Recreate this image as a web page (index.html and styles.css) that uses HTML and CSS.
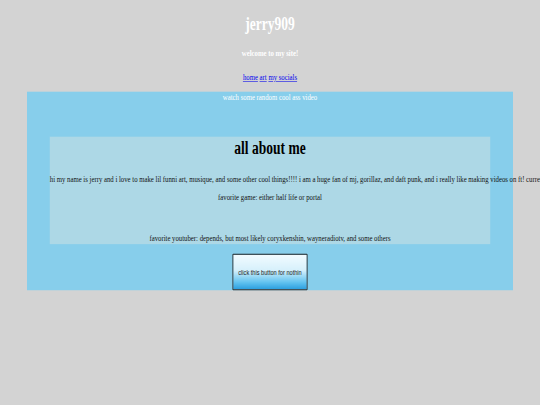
FILE: index.html
```html
<!DOCTYPE html>
<html lang="en">
<head>
    <meta charset="UTF-8">
    <meta name="viewport" content="width=device-width, initial-scale=1.0">
    <title>jerry909</title>
    <link rel="stylesheet" href="styles.css">
</head>
<body>
    <div class="screen">
        <h1 class="site-title">jerry909</h1>
        <h4 class="welcome">welcome to my site!</h4>
        <p class="nav"><a href="#">home</a> <a href="#">art</a> <a href="#">my socials</a></p>

        <div class="main-box">
            <p class="video-note">watch some random cool ass video</p>

            <div class="about">
                <h2>all about me</h2>
                <p class="bio">hi my name is jerry and i love to make lil funni art, musique, and some other cool things!!!! i am a huge fan of mj, gorillaz, and daft punk, and i really like making videos on ft! currently</p>
                <p>favorite game: either half life or portal</p>
                <p class="youtuber">favorite youtuber: depends, but most likely coryxkenshin, wayneradiotv, and some others</p>
            </div>

            <button class="nothing-btn" onclick="alert('nothin')">click this button for nothin</button>
        </div>
    </div>
</body>
</html>
```

FILE: styles.css
```css
html,
body {
    margin: 0;
    padding: 0;
    overflow: hidden;
}

body {
    background-color: #d3d3d3;
    font-family: "Liberation Serif", "Times New Roman", serif;
    font-size: 16px;
    text-align: center;
}

.screen {
    width: 1280px;
    height: 720px;
    padding-top: 24px;
    box-sizing: border-box;
    transform: scale(0.421875, 0.5625);
    transform-origin: 0 0;
}

.site-title {
    margin: 0 0 24px;
    font-size: 32px;
    font-weight: bold;
    color: white;
}

.welcome {
    margin: 0 0 26px;
    font-size: 16px;
    font-weight: bold;
    color: white;
}

.nav {
    margin: 0 0 16px;
}

.nav a {
    color: #0000ee;
}

.main-box {
    width: 90%;
    margin: 0 auto;
    background-color: skyblue;
}

.video-note {
    margin: 0 0 62px;
    color: white;
}

.about {
    margin: 0 54px;
    padding: 2px 0 1px;
    background-color: lightblue;
}

.about h2 {
    margin: 0 0 27px;
    font-size: 32px;
    font-weight: bold;
    color: black;
}

.about p {
    margin: 0 0 15px;
    color: #111;
}

.about .bio {
    white-space: nowrap;
}

.about .youtuber {
    margin: 55px 0 0;
}

.nothing-btn {
    display: block;
    margin: 17px auto 0;
    padding: 23px 12px;
    border: 2px solid #2a2a2a;
    border-radius: 2px;
    background: linear-gradient(#f2fbff, #d6f0fb 45%, #62c3f0 80%, #2c9fe0);
    font-family: "Liberation Sans", Arial, sans-serif;
    font-size: 13.33px;
    color: #222;
    cursor: pointer;
}

.nothing-btn:hover {
    background: linear-gradient(#ffffff, #e3f5fc 45%, #7ccff4 80%, #3aa9e6);
}
```
